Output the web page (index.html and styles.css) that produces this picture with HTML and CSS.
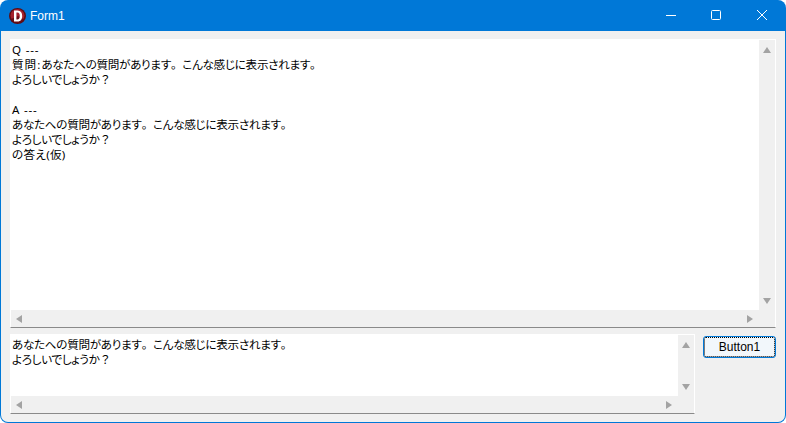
FILE: index.html
```html
<!DOCTYPE html>
<html lang="ja">
<head>
<meta charset="utf-8">
<title>Form1</title>
<link rel="stylesheet" href="styles.css">
</head>
<body>
<div class="window">
  <header class="titlebar">
    <svg class="app-icon" width="17" height="16" viewBox="0 0 17 16"><ellipse cx="8.500" cy="8" rx="8.500" ry="8" fill="#5a0c14"/><ellipse cx="8.500" cy="7.500" rx="7" ry="6.500" fill="#a3202b"/><path d="M2 11A7.500 7.500 0 0 0 15 11.500L9 8z" fill="#6a0d16"/><path d="M5 2.500h3.600c3 0 4.600 2.100 4.600 5.500s-1.600 5.500-4.600 5.500H5zM7.400 4.600v6.800h1.100c1.500 0 2.300-1.200 2.300-3.400s-.8-3.400-2.300-3.400z" fill="#fff" fill-rule="evenodd"/></svg>
    <span class="title">Form1</span>
    <div class="caption-buttons">
      <svg class="cap" width="46" height="31" viewBox="0 0 46 31"><path d="M19 15.500h10" stroke="#fff" fill="none"/></svg>
      <svg class="cap" width="46" height="31" viewBox="0 0 46 31"><rect x="18.500" y="10.500" width="9" height="9" rx="1" stroke="#fff" fill="none"/></svg>
      <svg class="cap" width="46" height="31" viewBox="0 0 46 31"><path d="M18 10l10 10M28 10L18 20" stroke="#fff" fill="none"/></svg>
    </div>
  </header>
  <main class="client">
    <section class="memo memo-top">
      <div class="memo-row">
        <div class="memo-text"><span class="lat">Q ---</span>
<span class="label">質問:</span>あなたへの質問があります<span class="fw">。</span>こんな感じに表示されます<span class="fw">。</span>
よろしいでしょうか<span class="fw">？</span>

<span class="lat">A ---</span>
あなたへの質問があります<span class="fw">。</span>こんな感じに表示されます<span class="fw">。</span>
よろしいでしょうか<span class="fw">？</span>
<span class="plain">の答え(仮)</span></div>
        <div class="vbar"><i class="arrow up"></i><i class="arrow down"></i></div>
      </div>
      <div class="hbar"><i class="arrow left"></i><i class="arrow right"></i></div>
    </section>
    <div class="bottom">
      <section class="memo memo-bottom">
        <div class="memo-row">
          <div class="memo-text">あなたへの質問があります<span class="fw">。</span>こんな感じに表示されます<span class="fw">。</span>
よろしいでしょうか<span class="fw">？</span></div>
          <div class="vbar"><i class="arrow up"></i><i class="arrow down"></i></div>
        </div>
        <div class="hbar"><i class="arrow left"></i><i class="arrow right"></i></div>
      </section>
      <button class="btn" type="button">Button1</button>
    </div>
  </main>
</div>
</body>
</html>
```
FILE: styles.css
```css
html, body { margin: 0; padding: 0; background: #fff; }
.window {
  width: 786px; height: 423px; box-sizing: border-box;
  display: flex; flex-direction: column;
  background: #0078d7; border-radius: 8px; padding: 0 1px 1px; overflow: hidden;
  font-family: "Noto Sans", "Noto Sans CJK JP", sans-serif;
}
.titlebar { height: 31px; flex: none; display: flex; align-items: center; color: #fff; padding-left: 8px; }
.app-icon { flex: none; }
.title { margin-left: 4px; font: 12px "Liberation Sans", "Noto Sans", sans-serif; }
.caption-buttons { margin-left: auto; display: flex; }
.cap { display: block; }
.client { flex: 1; min-height: 0; background: #f0f0f0; border-radius: 0 0 7px 7px; padding: 8px 9px 8px; display: flex; flex-direction: column; }
.memo { display: flex; flex-direction: column; border: 1px solid #fff; border-bottom-color: #8a8a8a; box-sizing: border-box; background: #f0f0f0; }
.memo-top { height: 289px; flex: none; }
.memo-row { flex: 1; min-height: 0; display: flex; }
.memo-text {
  flex: 1; background: #fff; white-space: pre-wrap; color: #000;
  font-size: 11.600px; line-height: 15px; padding: 2px 1px 0; letter-spacing: -0.3px;
  font-feature-settings: "palt" 1;
}
.fw { font-feature-settings: normal; }
.plain { letter-spacing: 0.3px; }
.label { letter-spacing: 1px; }
.lat { letter-spacing: 0.8px; }
.vbar { width: 16px; flex: none; display: flex; flex-direction: column; justify-content: space-between; align-items: center; padding: 7px 0 6px; box-sizing: border-box; }
.hbar { height: 17px; flex: none; display: flex; justify-content: space-between; align-items: center; padding: 0 22px 0 5px; }
.bottom { flex: none; display: flex; margin-top: 7px; align-items: flex-start; }
.memo-bottom { width: 685px; height: 80px; margin-top: -1px; }
.arrow { display: block; width: 0; height: 0; border-style: solid; border-color: transparent; }
.up { border-width: 0 4.500px 6px; border-bottom-color: #a3a3a3; }
.down { border-width: 6px 4.500px 0; border-top-color: #a3a3a3; }
.left { border-width: 4.500px 6px 4.500px 0; border-right-color: #a3a3a3; }
.right { border-width: 4.500px 0 4.500px 6px; border-left-color: #a3a3a3; }
.btn {
  width: 73px; height: 22px; margin: 1px 0 0 8px; padding: 0; box-sizing: border-box;
  background: #f2f7fb; color: #000; border: 1px solid #0078d7; border-radius: 3px;
  outline: 1px dotted #000; outline-offset: -2px;
  font: 12px "Liberation Sans", sans-serif;
}
```
